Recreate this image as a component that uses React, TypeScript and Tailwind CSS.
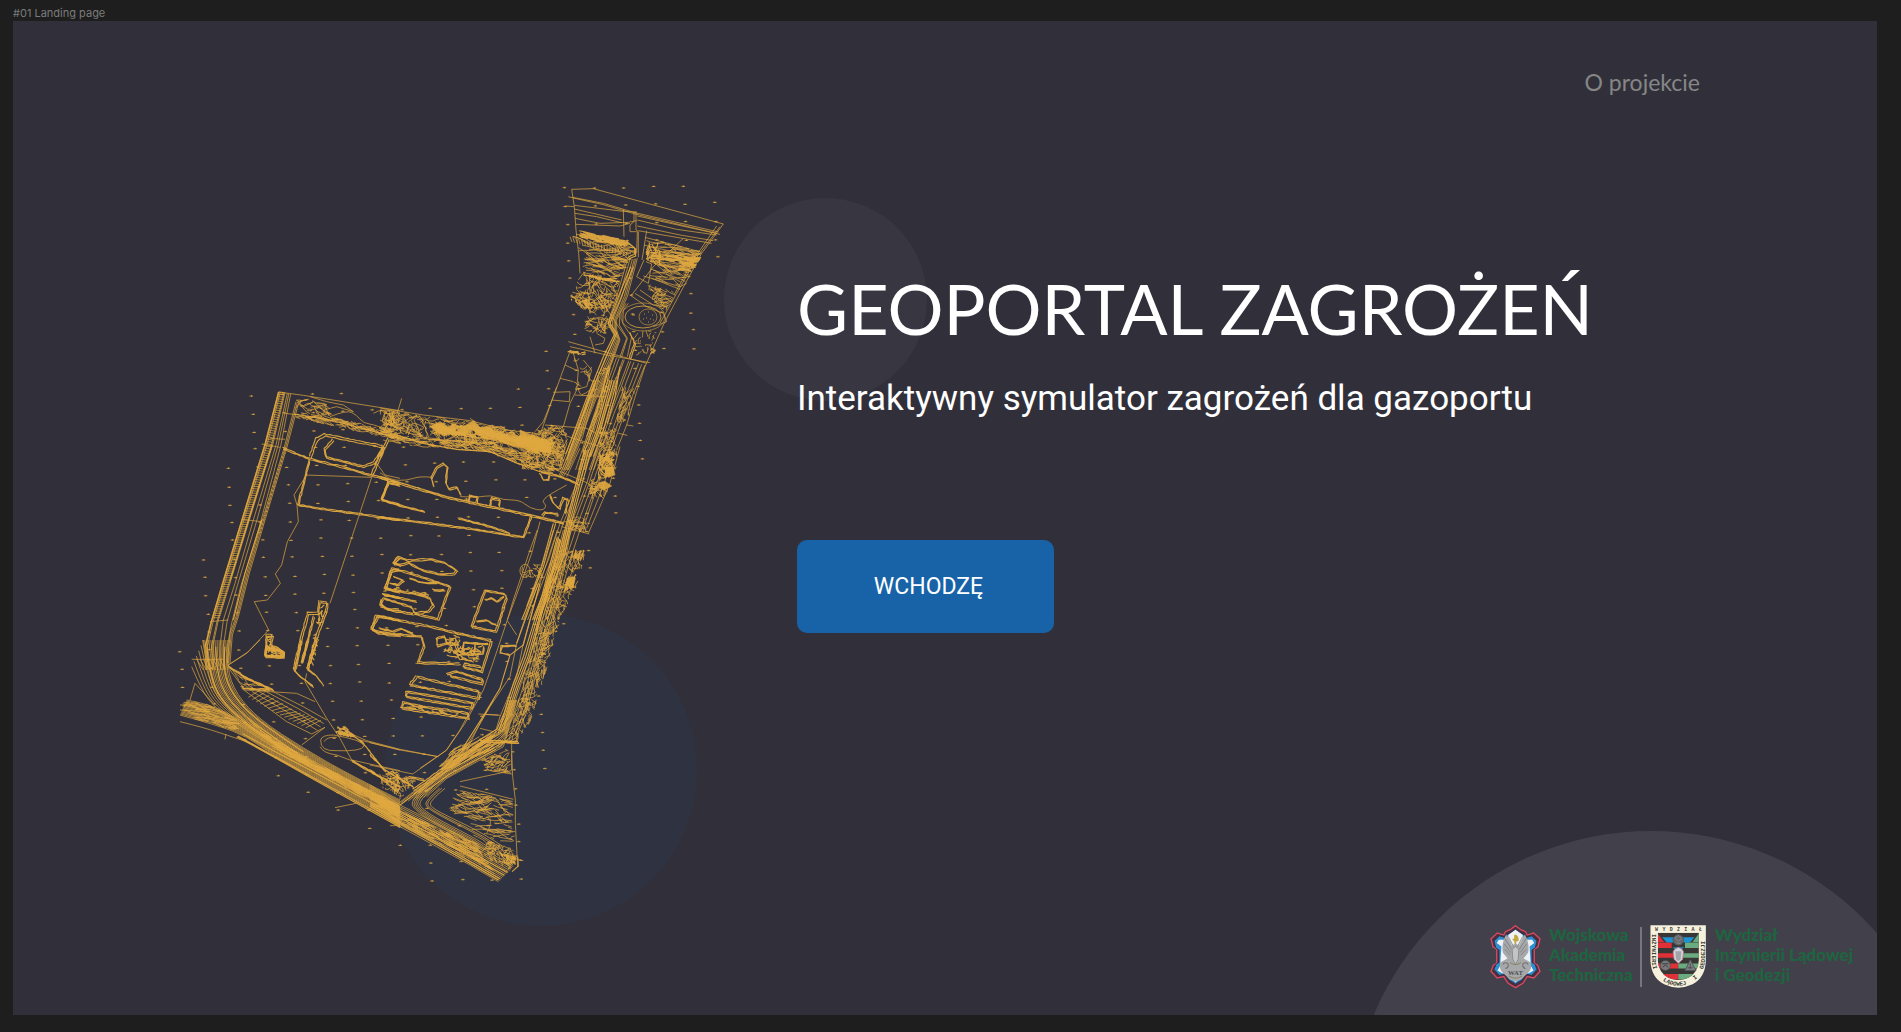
import React from 'react';

type Pt = [number, number];

/* ---------- drawing helpers for the survey map ---------- */

let seed = 7;
const rnd = () => {
  seed = (seed * 16807) % 2147483647;
  return seed / 2147483647;
};
const jit = (a: number) => (rnd() - 0.5) * 2 * a;
const n1 = (v: number) => Math.round(v * 10) / 10;

const parse = (s: string): Pt[] =>
  s.split(' ').map((p) => {
    const [x, y] = p.split(',');
    return [Number(x), Number(y)] as Pt;
  });

const line = (pts: Pt[]) => 'M' + pts.map((p) => `${n1(p[0])} ${n1(p[1])}`).join('L');

const smooth = (pts: Pt[]) => {
  if (pts.length < 3) return line(pts);
  let d = `M${n1(pts[0][0])} ${n1(pts[0][1])}`;
  for (let i = 1; i < pts.length - 1; i++) {
    const last = i === pts.length - 2;
    const ex = last ? pts[i + 1][0] : (pts[i][0] + pts[i + 1][0]) / 2;
    const ey = last ? pts[i + 1][1] : (pts[i][1] + pts[i + 1][1]) / 2;
    d += `Q${n1(pts[i][0])} ${n1(pts[i][1])} ${n1(ex)} ${n1(ey)}`;
  }
  return d;
};

const mix = (a: Pt, b: Pt, t: number): Pt => [a[0] + (b[0] - a[0]) * t, a[1] + (b[1] - a[1]) * t];

/* a family of lines between two edge polylines */
const family = (a: string, b: string, ts: number[], curved = false) => {
  const A = parse(a);
  const B = parse(b);
  return ts
    .map((t) => {
      const pts = A.map((p, i) => mix(p, B[i], t));
      return curved ? smooth(pts) : line(pts);
    })
    .join('');
};

/* short rungs between two edge polylines */
const rungs = (a: string, b: string, step: number) => {
  const A = parse(a);
  const B = parse(b);
  let d = '';
  for (let i = 0; i < A.length - 1; i++) {
    const len = Math.hypot(A[i + 1][0] - A[i][0], A[i + 1][1] - A[i][1]);
    const n = Math.max(1, Math.round(len / step));
    for (let k = 0; k < n; k++) {
      d += line([mix(A[i], A[i + 1], k / n), mix(B[i], B[i + 1], k / n)]);
    }
  }
  return d;
};

const inside = (x: number, y: number, poly: Pt[]) => {
  let c = false;
  for (let i = 0, j = poly.length - 1; i < poly.length; j = i++) {
    const [xi, yi] = poly[i];
    const [xj, yj] = poly[j];
    if (yi > y !== yj > y && x < ((xj - xi) * (y - yi)) / (yj - yi) + xi) c = !c;
  }
  return c;
};

/* wandering contour strokes inside a polygon */
const scribble = (poly: string, n: number, len: number, deg: number, spread: number) => {
  const P = parse(poly);
  const xs = P.map((p) => p[0]);
  const ys = P.map((p) => p[1]);
  const x0 = Math.min(...xs);
  const x1 = Math.max(...xs);
  const y0 = Math.min(...ys);
  const y1 = Math.max(...ys);
  let d = '';
  for (let k = 0; k < n; k++) {
    let x = 0;
    let y = 0;
    let tries = 0;
    do {
      x = x0 + rnd() * (x1 - x0);
      y = y0 + rnd() * (y1 - y0);
      tries++;
    } while (!inside(x, y, P) && tries < 60);
    const pts: Pt[] = [[x, y]];
    let a = ((deg + jit(spread)) * Math.PI) / 180;
    for (let s = 0; s < 4; s++) {
      a += jit((spread * Math.PI) / 360);
      x += (Math.cos(a) * len) / 4;
      y += (Math.sin(a) * len) / 4;
      if (!inside(x, y, P)) break;
      pts.push([x, y]);
    }
    if (pts.length > 1) d += line(pts);
  }
  return d;
};

/* double, slightly uneven wall line */
const wall = (s: string, w = 4) => {
  const P = parse(s);
  const dense: Pt[] = [];
  for (let i = 0; i < P.length - 1; i++) {
    const len = Math.hypot(P[i + 1][0] - P[i][0], P[i + 1][1] - P[i][1]);
    const n = Math.max(1, Math.round(len / 9));
    for (let k = 0; k < n; k++) dense.push(mix(P[i], P[i + 1], k / n));
  }
  dense.push(P[P.length - 1]);
  const off = (o: number) => dense.map(([x, y]) => [x + o * 0.7 + jit(1.2), y + o + jit(1.2)] as Pt);
  return line(off(-w / 2)) + line(off(w / 2));
};

const T = (n: number) => Array.from({ length: n }, (_, i) => i / (n - 1));

/* ---------- map sheets: each one is drawn at three units per pixel ---------- */

type Sheet = { x: number; y: number; fine: string; bold: string; solid?: string };

const north: Sheet = {
  x: 520,
  y: 170,
  fine: [
    line(parse('155,58 220,56 610,162 545,250 480,370 430,465 375,590 350,665 320,765 290,840')),
    line(parse('600,170 535,255 470,370 420,460')),
    line(parse('590,168 525,262 462,375')),
    line(parse('155,58 163,110 168,180 176,250 180,310')),
    line(parse('158,82 250,100 345,128 595,186')),
    line(parse('160,84 250,104 345,132 590,190')),
    line(parse('163,106 310,124 350,126')),
    line(parse('163,117 305,150')),
    line(parse('165,130 230,140 305,158')),
    line(parse('165,145 240,160 325,157 350,152')),
    line(parse('168,163 300,168 330,160')),
    line(parse('352,150 470,178 590,195')),
    line(parse('352,168 480,195 580,212')),
    line(parse('355,182 400,190 575,220')),
    line(parse('352,138 600,193')),
    line(parse('145,80 160,84')),
    line(parse('137,108 162,110')),
    line(parse('310,118 312,200')),
    line(parse('342,125 342,155 330,165 330,185 350,185')),
    line(parse('348,125 348,180 355,185 355,262')),
    line(parse('352,185 350,250')),
    line(parse('380,182 366,270')),
    line(parse('490,205 400,290 335,375')),
    line(parse('500,305 390,270')),
    line(parse('375,202 540,245')),
    line(parse('372,225 530,262')),
    line(parse('370,318 480,350 500,340')),
    line(parse('400,300 490,330')),
    line(parse('395,325 480,358')),
    line(parse('372,270 350,320 385,340 395,282 378,275')),
    line(parse('330,375 380,410 430,430 440,455 400,470')),
    line(parse('345,370 400,405 440,410')),
    line(parse('360,360 410,395 445,400')),
    family('322,270 290,380 265,455 265,465 285,500 260,560 215,660 175,760 135,860 120,900', '352,265 322,380 290,450 290,480 300,510 275,580 235,670 195,770 155,870 145,900', [0, 0.25, 0.5, 0.7, 0.85, 1]),
    line(parse('325,400 310,420 308,460 335,500 322,560')),
    line(parse('318,400 300,430 298,465 322,505 305,560')),
    line(parse('215,350 250,400 285,455 320,505 300,560')),
    line(parse('150,545 135,585 105,668 70,755 45,785')),
    line(parse('160,550 175,600 170,660 150,700 130,770')),
    line(parse('135,585 172,602')),
    line(parse('120,625 160,635')),
    line(parse('100,667 150,665 148,695 95,690')),
    line(parse('145,515 270,550 380,580')),
    line(parse('150,530 260,555 390,578')),
    line(parse('210,500 225,550')),
    line(parse('165,675 260,680')),
    line(parse('190,570 215,600 200,650 165,660')),
    line(parse('230,490 255,505 250,520 225,525')),
    family('278,560 250,640 225,720 195,810 165,900', '375,585 345,660 310,740 285,810 250,900', [0.02, 0.12, 0.2, 0.32, 0.36, 0.5, 0.56, 0.66, 0.8, 0.9, 1]),
    line(parse('75,765 200,775 230,790')),
    line(parse('130,795 240,830')),
    line(parse('320,765 340,768')),
    line(parse('295,790 322,796')),
    rungs('150,200 330,245', '156,216 326,262', 9),
    scribble('150,185 330,215 350,240 300,330 180,300 176,240', 110, 60, 12, 25),
    scribble('180,300 300,330 290,400 250,440 200,430 150,385 165,340', 110, 40, 20, 80),
    scribble('375,200 550,245 490,350 440,340 390,320 372,270', 100, 55, 12, 22),
    scribble('380,340 480,370 440,430 400,400', 44, 34, 160, 60),
    scribble('195,430 285,440 265,490 190,490', 50, 36, 150, 70),
    scribble('335,480 410,480 400,550 335,560', 22, 20, 100, 80),
    scribble('300,650 350,650 320,760 290,760', 36, 40, 110, 40),
    scribble('240,760 290,770 290,900 230,900', 54, 26, 110, 90),
    scribble('160,560 300,600 280,700 160,680', 30, 26, 100, 90),
    scribble('45,780 150,760 130,900 0,900 0,800', 130, 36, 20, 80),
  ].join(''),
  bold: [
    scribble('170,180 325,212 325,232 170,200', 60, 50, 12, 10),
    scribble('480,265 545,262 520,305 470,300', 50, 30, 10, 20),
    scribble('375,205 430,215 420,290 375,270', 24, 30, 100, 60),
    scribble('380,245 540,262 530,280 390,270', 30, 40, 8, 10),
    scribble('180,310 300,325 300,338 185,320', 24, 40, 8, 10),
    scribble('146,372 205,385 230,420 200,415 150,390', 32, 22, 20, 80),
    scribble('140,538 200,545 200,556 140,552', 16, 24, 5, 30),
    scribble('380,538 410,530 405,552 385,552', 12, 14, 20, 80),
    wall('330,490 345,520 330,565', 5),
    wall('320,215 345,235 345,255 325,265', 5),
    line(parse('340,290 300,390 270,460 290,490 258,560 205,690 145,850')),
    line(parse('332,290 295,380 265,460 284,492 250,560 198,690 138,850')),
    wall('268,590 258,640 240,710 190,850', 6),
    line(parse('262,600 250,650 230,720 200,800')),
    line(parse('300,590 285,680 262,760')),
  ].join(''),
  solid: 'M0 780L45 800L95 818L90 850L40 840L0 815Z',
};

const west: Sheet = {
  x: 170,
  y: 370,
  fine: [
    line(parse('325,66 400,76 690,122')),
    family('325,66 285,220 215,450 160,630 122,760 105,830 108,900', '345,68 308,225 238,450 183,630 145,750 128,830 132,900', [0, 0.12, 0.3, 0.85, 1]),
    rungs('327,66 287,220 217,450 162,630 125,750', '345,68 308,225 238,450 183,630 148,750', 7),
    family('352,70 318,225 250,450 195,640 160,750 150,830 152,900', '362,72 332,228 268,470 212,650 185,760 172,830 172,900', [0, 0.45, 1]),
    family('378,95 342,235 280,440 230,610 198,740 180,790 172,880', '386,98 350,235 288,440 238,610 205,740 187,795 180,880', [0, 0.5, 1]),
    rungs('342,235 318,310 262,500', '350,238 326,312 270,500', 13),
    line(parse('275,222 330,232')),
    line(parse('300,205 345,208')),
    line(parse('215,448 275,455')),
    line(parse('120,755 175,750')),
    line(parse('345,130 385,135')),
    line(parse('405,315 605,322')),
    line(parse('605,322 480,700')),
    line(parse('400,330 372,375 381,405 385,455 352,515 335,585 316,612 331,640 292,690 253,695 296,780 230,850 175,885')),
    line(parse('620,280 645,315 690,325')),
    line(parse('380,90 400,110 430,95 460,120 500,110 550,125 520,105 470,95 420,80')),
    smooth(parse('480,140 530,120 560,135 580,160 620,165 660,185')),
    smooth(parse('610,130 640,110 690,130')),
    scribble('375,80 470,95 490,140 375,130', 34, 40, 30, 60),
    scribble('372,125 480,140 690,182 690,210 560,185 372,142', 110, 34, 14, 26),
    scribble('620,120 690,120 690,180 640,160', 30, 26, 40, 90),
    family('80,868 100,900', '150,868 165,900', T(8)),
    line(parse('65,868 160,868')),
  ].join(''),
  bold: [
    line(parse('326,66 286,220 216,450 161,630 123,758 106,830')),
    line(parse('306,225 236,450 180,632')),
    line(parse('275,450 225,610 190,750')),
    line(parse('372,132 480,150 690,205')),
    wall('340,235 420,267 520,292 605,316 690,340', 5),
    wall('420,262 440,208 465,195 640,230 625,270', 7),
    wall('490,208 465,238 468,262 580,290 612,278 640,236', 5),
    wall('655,205 630,262 605,316', 6),
    wall('418,270 404,330 384,405 480,420 565,432', 4),
    wall('565,432 690,450', 4),
    wall('690,405 635,388 655,338 690,348', 4),
    wall('290,795 308,797 303,825 342,845 340,862 287,860 290,795', 5),
    scribble('286,795 308,797 303,825 342,845 340,862 287,862', 50, 20, 10, 40),
    wall('450,695 472,698 470,720 440,800 412,900', 6),
    wall('448,695 445,730 415,730 395,800 372,900', 6),
    wall('432,740 395,880', 4),
    scribble('450,700 472,700 430,890 410,890', 34, 18, 100, 60),
    wall('690,562 672,578 690,588', 4),
    wall('690,598 662,605 648,655 690,668', 5),
    wall('640,675 690,685', 4),
    wall('690,720 650,718 632,700 640,685', 5),
    wall('690,752 625,738 605,775 625,790 690,798', 5),
  ].join(''),
};

const middle: Sheet = {
  x: 380,
  y: 380,
  fine: [
    line(parse('0,84 130,105 270,122 380,150 480,162')),
    line(parse('65,55 50,105')),
    line(parse('270,115 290,128')),
    smooth(parse('0,278 30,300 80,302 120,288 158,292')),
    smooth(parse('240,350 300,352 330,345 370,360 420,360 450,385 490,392 500,375 485,365 505,345 560,315')),
    line(parse('480,425 455,520 430,590 382,720')),
    line(parse('480,165 530,20')),
    line(parse('0,120 60,150 120,170 230,185 320,190')),
    line(parse('600,205 560,290')),
    family('640,0 590,170 555,250 535,290', '655,0 608,170 575,250 550,290', [0, 0.3, 0.6, 1]),
    family('615,210 590,310 540,430 505,540 430,720', '690,200 650,310 600,450 570,540 520,720', [0, 0.14, 0.5, 0.62, 0.8, 1]),
    family('690,210 655,310 615,430', '720,200 690,310 625,460', [0, 0.5, 1]),
    line(parse('530,270 625,310 670,355')),
    line(parse('550,425 630,430')),
    line(parse('545,440 628,462')),
    scribble('0,85 130,105 150,180 0,150', 100, 34, 20, 90),
    scribble('0,150 130,175 320,180 480,240 540,270 520,285 420,255 320,215 120,202 0,180', 230, 34, 12, 30),
    scribble('130,105 380,140 520,170 520,225 420,230 320,200 140,180', 210, 40, 18, 60),
    scribble('470,150 545,120 560,200 540,280 500,250', 80, 26, 100, 90),
    scribble('630,290 690,300 680,350 620,360', 40, 34, 100, 90),
    scribble('560,410 625,410 620,460 560,450', 44, 24, 90, 90),
    scribble('550,500 620,510 590,620 540,720 490,720', 110, 24, 110, 60),
    scribble('655,150 700,150 700,205 655,205', 26, 22, 100, 90),
    scribble('420,555 490,550 495,595 425,595', 22, 22, 60, 90),
    'M420 570A14 18 0 1 0 450 575A14 18 0 1 0 420 570M455 570A12 16 0 1 0 480 572',
  ].join(''),
  bold: [
    line(parse('0,152 60,168 130,190 230,208 330,215 400,245 480,275')),
    wall('480,275 540,290 595,312', 5),
    wall('0,292 100,322 200,352 320,378 450,406 550,430', 6),
    line(parse('0,290 100,320 200,350 320,376 450,404 550,428')),
    wall('0,412 130,428 260,445 430,472 455,408', 4),
    wall('25,305 5,360 65,378 135,396', 4),
    wall('235,415 330,440 390,460', 4),
    wall('160,318 155,295 170,262 190,252 202,262 198,310 208,328 232,322 242,345', 4),
    wall('265,365 270,348 292,352 290,368', 4),
    wall('330,378 335,355 360,360 357,380', 4),
    wall('510,345 520,370 538,385 550,355 565,360 555,400', 4),
    wall('487,408 495,398 535,402', 3),
    wall('480,280 490,300 505,300 508,285', 3),
    family('610,210 585,310 560,420 535,520 455,720', '640,210 612,310 580,420 560,520 480,720', [0.1, 0.3, 0.55, 0.8]),
    family('690,0 650,150 620,230', '712,0 670,150 640,230', [0, 0.3, 0.6, 1]),
    line(parse('527,430 490,560 425,720')),
    line(parse('520,430 484,560 440,680')),
    line(parse('645,10 600,130 560,240')),
    scribble('150,125 380,150 520,190 500,218 330,180 150,160', 190, 34, 15, 30),
    scribble('655,215 705,212 700,290 655,300', 60, 28, 100, 60),
    scribble('560,590 590,580 580,625 550,640', 34, 20, 100, 60),
    scribble('585,508 622,510 600,545 580,535', 34, 24, 110, 30),
  ].join(''),
  solid:
    'M150 140L180 125L205 140L228 132L226 155L250 140L280 122L300 142L330 140L345 158L400 165L430 178L460 165L480 180L515 200L512 218L480 205L470 222L430 205L400 200L370 188L340 170L300 165L280 150L240 165L215 160L190 168L170 155ZM657 308L675 304L695 318L672 330L657 322ZM672 262L700 262L705 285L680 290ZM565 590L585 592L580 618L556 616Z',
};

const plant: Sheet = {
  x: 350,
  y: 530,
  fine: [
    line(parse('562,0 540,60 515,135 490,210 472,270 425,410 400,480 345,580 290,660 210,715')),
    line(parse('472,272 500,315')),
    line(parse('0,610 50,632 150,658 265,680')),
    line(parse('385,552 450,556')),
    line(parse('390,595 430,605')),
    family('610,0 560,160 500,340 480,440 420,530 385,590 330,680 275,720', '622,0 570,160 520,340 500,440 450,560 435,610 370,650 300,720', [0, 1]),
    family('640,0 600,160 545,360 510,470 480,560 435,610', '665,0 630,200 570,400 530,560 500,630 480,640', [0, 0.2, 0.4, 0.6, 0.75, 0.9]),
    scribble('600,100 632,60 632,270 590,420 545,570 500,640 465,640 500,520 545,360', 260, 26, 105, 50),
    scribble('560,300 625,300 620,320 590,320 590,400 560,400', 34, 20, 0, 20),
    scribble('500,500 545,500 535,575 495,575', 34, 18, 10, 90),
    scribble('320,640 440,600 480,640 290,720 260,720', 100, 60, 145, 16),
    line(parse('485,640 485,720')),
  ].join(''),
  bold: [
    wall('130,102 145,82 178,92 240,88 282,98 320,122 313,133 265,133 215,120 175,98 155,105 130,102', 5),
    wall('128,115 180,130 300,170 265,268 190,250', 5),
    wall('128,115 105,178 190,190 240,205 250,228 235,245 195,250 185,232 100,205', 5),
    wall('98,192 200,216', 4),
    wall('95,210 92,228 130,242 190,252', 5),
    wall('130,140 160,152 145,165 120,160', 3),
    wall('178,145 215,158 260,160', 3),
    wall('248,180 285,182', 4),
    scribble('110,165 240,190 235,202 108,180', 24, 24, 10, 40),
    wall('78,258 65,300 110,310 215,320 222,350 205,398 330,402', 5),
    wall('78,258 250,292 330,312 425,332 395,425 342,412 345,402 395,412', 5),
    wall('88,295 130,305 155,296 190,312', 4),
    wall('342,340 335,372 370,376', 3),
    wall('375,345 372,372 398,372 402,350', 3),
    wall('340,338 415,342', 3),
    wall('405,182 465,192 470,205 438,305 365,290 405,182', 5),
    wall('405,210 425,205 440,215 462,200', 3),
    wall('380,275 410,270 425,280 440,285', 3),
    wall('260,325 285,320 290,340 262,348 260,325', 4),
    scribble('260,360 400,345 385,400 290,385', 40, 34, 15, 60),
    scribble('290,315 335,315 330,385 280,360', 34, 22, 60, 90),
    wall('290,432 320,425 400,450 395,462 300,438', 5),
    wall('200,440 180,465 385,505 388,485 290,462 200,440', 5),
    wall('170,485 168,500 365,535 370,520 260,500 170,485', 5),
    wall('160,518 155,535 355,565 355,550 230,532 160,518', 5),
    scribble('160,525 350,552 350,562 160,535', 24, 26, 10, 40),
    wall('500,348 455,348 450,368 480,375', 3),
    line(parse('570,160 520,345 480,375 450,475 405,550 335,660')),
    line(parse('565,160 500,340')),
    family('622,20 575,200 520,380 490,460 462,550 440,600', '632,30 590,200 540,380 505,470 475,560 455,605', [0, 0.35, 0.7, 1]),
    wall('390,633 505,637', 5),
    line(parse('440,598 340,660 270,720')),
  ].join(''),
};

const rail: Sheet = {
  x: 170,
  y: 640,
  fine: [
    family('178,0 168,80 200,165 270,240 400,325 540,405 690,480', '98,0 112,90 135,170 230,260 350,340 500,420 690,520', T(14), true),
    family('100,0 120,110 160,190 250,260 400,350 690,500', '65,80 90,140 130,200 220,265 390,370 690,520', T(6), true),
    family('50,180 120,192 220,245 300,300 430,370 560,435 690,500', '30,225 150,258 230,290 310,345 430,415 560,480 690,555', T(15), true),
    smooth(parse('30,245 100,262 200,295 250,312 310,350')),
    line(parse('75,130 60,180')),
    line(parse('75,130 130,190')),
    line(parse('168,282 165,298')),
    line(parse('30,195 110,195')),
    line(parse('30,210 120,215')),
    line(parse('175,75 235,35 270,0')),
    line(parse('215,145 350,245 425,282 465,262')),
    line(parse('180,90 225,150 300,155 380,160 435,185')),
    line(parse('410,100 405,125 470,235 510,295 545,360 605,395')),
    line(parse('465,262 395,315')),
    line(parse('570,300 690,330')),
    line(parse('545,360 690,392')),
    line(parse('495,503 558,490')),
    'M452 300Q455 285 490 285Q580 300 582 318Q575 335 500 332Q450 335 452 300Z',
    'M462 305Q470 290 500 292M450 320Q460 340 500 345L545 362',
    family('240,155 350,220 440,275', '300,150 400,200 470,240', [0.1, 0.4, 0.7, 1]),
    rungs('235,172 330,225 420,270', '270,150 380,215 465,245', 14),
    scribble('180,80 310,150 220,150', 30, 34, 30, 30),
    scribble('220,225 300,290 430,365 690,495 690,530 560,460 300,320', 260, 34, 29, 10),
    scribble('30,185 110,185 220,250 200,275 30,225', 70, 44, 14, 14),
    scribble('620,400 690,400 690,470 640,450', 34, 22, 30, 90),
  ].join(''),
  bold: [
    family('165,20 158,90 190,170 265,245 400,335', '110,20 120,100 150,180 240,262 370,350', [0, 0.5, 1], true),
    wall('175,80 230,115 310,150', 4),
    wall('215,145 300,150', 3),
    wall('372,90 385,105 430,140', 4),
    wall('412,88 435,105 460,135', 5),
    wall('375,90 395,0', 5),
    wall('412,88 440,0', 5),
    wall('396,68 415,0', 4),
    scribble('488,255 525,258 560,295 500,285', 44, 24, 35, 40),
    wall('530,270 580,310 645,395', 4),
    wall('545,362 610,400 690,440', 4),
    wall('285,48 290,22 342,38 340,50 287,48', 5),
    family('200,290 310,350 430,418 690,562', '230,275 320,325 430,380 690,515', [0, 0.12, 0.6]),
    scribble('640,405 690,400 690,440 650,440', 12, 18, 40, 90),
  ].join(''),
};

const south: Sheet = {
  x: 370,
  y: 700,
  fine: [
    family('0,255 90,315 200,370 330,440 430,500', '0,325 90,380 200,440 300,495 385,545', T(13)),
    family('85,310 170,245 290,155 350,115 400,90 420,0', '170,290 230,235 330,180 400,140 410,110 440,0', [0, 0.08, 0.2, 0.35, 0.5, 0.62, 0.75, 0.9, 1]),
    family('160,262 125,300 128,325 200,375 310,430 335,450', '225,265 180,302 182,322 240,352 340,400 400,440', [0, 0.1, 0.2, 0.3, 0.42, 0.75, 0.85, 1], true),
    smooth(parse('310,405 345,420 355,440 330,460')),
    line(parse('425,160 428,230 436,300 436,370 443,500')),
    line(parse('370,0 330,70 290,150')),
    line(parse('318,0 270,90 228,152 128,222')),
    line(parse('0,128 90,150 205,170')),
    line(parse('0,195 128,222')),
    line(parse('270,245 340,230 425,212')),
    line(parse('345,43 385,45')),
    line(parse('270,258 430,298')),
    line(parse('60,377 90,377')),
    line(parse('355,195 350,210 425,222')),
    smooth(parse('238,325 270,310 290,325 285,345 240,330')),
    smooth(parse('305,388 380,385 435,395')),
    smooth(parse('350,400 365,375 360,355')),
    line(parse('415,470 460,482')),
    scribble('330,180 420,140 425,222 350,212', 60, 30, 160, 40),
    scribble('250,265 430,300 435,375 320,365 240,340', 100, 44, 10, 30),
    scribble('300,370 435,370 438,440 350,410', 26, 50, 8, 20),
    scribble('345,420 420,440 445,470 420,510 340,470', 80, 24, 40, 80),
    scribble('0,265 90,325 330,450 385,530 300,480 90,370 0,315', 200, 34, 29, 10),
    scribble('70,215 140,240 90,300 60,270', 40, 26, 40, 90),
    scribble('200,370 300,420 340,430 320,460 210,400', 60, 26, 29, 20),
  ].join(''),
  bold: [
    family('0,318 90,372 200,432 385,540', '0,270 90,335 200,392 420,512', [0, 0.14, 0.5, 0.8]),
    family('120,285 220,205 360,125', '170,275 240,225 380,150', [0.2, 0.5, 0.9]),
    wall('130,270 215,210 345,125', 5),
    wall('340,123 445,127', 5),
    line(parse('90,315 180,248 300,160')),
    wall('0,165 45,210 130,260', 3),
    wall('50,225 70,215 100,245 120,232 165,240', 4),
    wall('0,210 40,240 75,270', 4),
    line(parse('385,100 415,0')),
    line(parse('375,105 350,120 300,155')),
    scribble('385,455 440,470 435,495 400,490', 26, 22, 40, 60),
    line(parse('426,515 445,498 443,470')),
  ].join(''),
};

const sheets = [north, west, middle, plant, rail, south];

/* levelling points on the survey lattice */
const surveyArea = parse(
  '560,180 690,180 724,195 724,265 700,290 700,360 655,365 650,450 625,495 595,575 560,640 550,760 525,885 425,890 420,860 300,805 270,780 262,760 172,700 172,660 196,575 225,485 244,385 500,400 550,330 565,270',
);
let levelPoints = '';
for (let i = -8; i < 18; i++) {
  for (let j = -14; j < 30; j++) {
    const x = 311.7 + i * 29.6 + j * 1.2 + jit(1);
    const y = 394 - i * 0.7 + j * 18.1 + jit(1);
    if (inside(x, y, surveyArea)) levelPoints += `M${n1(x - 2)} ${n1(y)}h3.6M${n1(x)} ${n1(y - 1)}v1.6`;
  }
}

function SurveyMap() {
  return (
    <svg
      viewBox="175 180 560 705"
      className="w-[560px] shrink-0 overflow-visible"
      fill="none"
      stroke="#dfa83f"
      role="img"
      aria-label="Mapa gazoportu"
    >
      <path d={levelPoints} strokeWidth="1" opacity="0.75" />
      {sheets.map((s) => (
        <g key={`${s.x}-${s.y}`} transform={`translate(${s.x} ${s.y}) scale(0.33333)`}>
          <path d={s.fine} strokeWidth="2.7" opacity="0.78" />
          <path d={s.bold} strokeWidth="3.4" opacity="0.95" />
          {s.solid && <path d={s.solid} fill="#dfa83f" strokeWidth="2" opacity="0.9" />}
        </g>
      ))}
      <g strokeWidth="0.8">
        <ellipse cx="643" cy="317" rx="18" ry="11" />
        <ellipse cx="643" cy="317" rx="22" ry="14" opacity="0.7" />
        <ellipse cx="648" cy="317" rx="9" ry="8" opacity="0.7" />
        <path d="M644 314h1M648 312h1M652 315h1M646 318h1M650 319h1M648 322h1M653 320h1M643 319h1M632 315h3" />
        <path d="M640 341h1M645 345h1M643 350h1M649 338h1M652 343h1M648 349h1M638 353h1" />
      </g>
    </svg>
  );
}

/* ---------- emblems ---------- */

const badge =
  'M136 80L152 92L166 98L171 108L190 102L209 119L203 143L192 150L192 192L202 198L209 216L191 236L171 232L158 252L136 265L114 252L101 232L81 236L63 216L70 198L80 192L80 150L69 143L63 119L82 102L101 108L106 98L120 92Z';

function AcademyEmblem() {
  return (
    <svg viewBox="60 75 152 194" className="h-[65px] w-[51px] shrink-0" role="img" aria-label="WAT">
      <path d={badge} fill="#4a2f3f" stroke="#d9495f" strokeWidth="4" />
      <g transform="translate(136 172) scale(0.88) translate(-136 -172)">
        <path d={badge} fill="#2f8fd0" stroke="#33304a" strokeWidth="3" />
      </g>
      <path d="M136 92L156 106L164 122L186 122L192 132L178 142L182 200L190 214L176 222L158 222L136 250L114 222L96 222L82 214L90 200L94 142L80 132L86 122L108 122L116 106Z" fill="#eef2f6" />
      <path d="M108 106Q94 130 98 160L112 178L90 190Q86 210 100 222L118 240L136 247L154 240L172 222Q186 210 182 190L160 178L174 160Q178 130 164 106L156 120L146 140L136 132L126 140L116 120Z" fill="#a7a8aa" />
      <path d="M104 118L124 150M102 134L122 160M104 150L120 168M168 118L148 150M170 134L150 160M168 150L152 168M114 112L130 142M158 112L142 142" stroke="#7d7e81" strokeWidth="2.5" fill="none" />
      <path d="M98 196Q104 186 114 194Q116 206 106 208M174 196Q168 186 158 194Q156 206 166 208" stroke="#6f7073" strokeWidth="3" fill="none" />
      <path d="M126 150L136 142L146 150L144 180L136 196L128 180Z" fill="#c3c4c6" stroke="#77787b" strokeWidth="2" />
      <path d="M120 190Q136 202 152 190M116 230Q136 244 156 230" stroke="#86805a" strokeWidth="3" fill="none" />
      <path d="M132 108L138 106L144 114L146 124L138 128L138 134H133V128L126 120L132 118Z" fill="#c5a83c" />
      <text x="136" y="227" textAnchor="middle" fontSize="20" fontWeight="700" fill="#4f5053" fontFamily="Liberation Serif, serif">
        WAT
      </text>
    </svg>
  );
}

function FacultyEmblem() {
  return (
    <svg viewBox="540 77 168 190" className="h-[63px] w-[56px] shrink-0" role="img" aria-label="Wydział Inżynierii Lądowej i Geodezji">
      <defs>
        <clipPath id="field">
          <path d="M563 100H687V185Q684 222 655 236Q625 250 595 236Q566 222 563 185Z" />
        </clipPath>
        <path id="rim" d="M545 104V190Q549 228 585 249Q625 272 665 249Q702 226 704 190V96" />
      </defs>
      <path d="M541 78H708V185Q706 236 668 256Q625 276 582 256Q543 236 541 185Z" fill="#f6f1dc" />
      <g clipPath="url(#field)">
        <rect x="560" y="98" width="130" height="145" fill="#393735" />
        <path d="M560 130H605V146H560ZM560 162H625V176H560ZM560 193H625V208H560ZM560 225H625V241H560Z" fill="#e03038" />
        <path d="M645 130H690V146H645ZM625 162H690V176H625ZM625 193H690V208H625ZM625 225H690V241H625Z" fill="#6bab80" />
        <path d="M576 114H674L660 130H590ZM608 144H642L625 160Z" fill="#1d93d2" />
        <path d="M561 100L582 128H561Z" fill="#e03038" />
        <path d="M689 100L668 128H689Z" fill="#6bab80" />
      </g>
      <circle cx="625" cy="122" r="16" fill="#67696b" stroke="#4a4b4d" strokeWidth="2" />
      <path d="M615 116L625 108L635 118L625 126ZM620 130L632 134" stroke="#8f9193" strokeWidth="2" fill="none" />
      <path d="M614 150L625 144L636 150L641 158L638 180L625 193L612 180L609 158Z" fill="#ccd5dd" stroke="#c86070" strokeWidth="2" />
      <path d="M616 156H634L632 180L625 186L618 180Z" fill="#a2a4a7" />
      <circle cx="586" cy="199" r="15" fill="#77797b" stroke="#4a4b4d" strokeWidth="2" />
      <path d="M576 194H596M578 204L586 198L594 204" stroke="#3f4042" strokeWidth="3" fill="none" />
      <path d="M661 182L678 214H645Z" fill="#7b8082" stroke="#55585a" strokeWidth="3" />
      <path d="M661 192V210M653 206H669" stroke="#3f4042" strokeWidth="2" />
      <g fontFamily="Liberation Mono, monospace" fontWeight="700" fill="#3c3a36">
        <text y="96" fontSize="15">
          {['W', 'Y', 'D', 'Z', 'I', 'A', 'Ł'].map((c, i) => (
            <tspan key={i} x={555 + i * 22}>
              {c}
            </tspan>
          ))}
        </text>
        <text fontSize="18">
          <textPath href="#rim">INŻYNIERII</textPath>
        </text>
        <text fontSize="18">
          <textPath href="#rim" startOffset="37%">
            LĄDOWEJ
          </textPath>
        </text>
        <text fontSize="18">
          <textPath href="#rim" startOffset="62%">
            I
          </textPath>
        </text>
        <text fontSize="18">
          <textPath href="#rim" startOffset="72%">
            GEODEZJI
          </textPath>
        </text>
      </g>
    </svg>
  );
}

/* ---------- page ---------- */

export default function App() {
  return (
    <div className="flex min-h-screen flex-col bg-[#1e1e1e] pr-6 pb-[17px] pl-[13px]">
      <p className="h-[21px] pt-[6px] font-['Inter',sans-serif] text-[11px] leading-[14px] text-[#7b7b7b]">#01 Landing page</p>

      <div className="relative flex flex-1 flex-col overflow-hidden bg-[#31303a]">
        <div className="absolute top-[177px] left-[711px] size-[203px] rounded-full bg-[#383741]" />
        <div className="absolute top-[593px] left-[372px] size-[312px] rounded-full bg-[#2f3241]" />
        <div className="absolute right-[-75px] bottom-[-418px] size-[602px] rounded-full bg-[#42414b]" />

        <header className="relative flex justify-end pt-[45px] pr-[177px]">
          <a href="#o-projekcie" className="font-['Lato',sans-serif] text-[23px] leading-8 text-[#868686]">
            O projekcie
          </a>
        </header>

        <main className="relative flex items-start gap-[62px] pt-[82px] pl-[162px]">
          <SurveyMap />
          <section className="flex min-w-0 flex-col items-start pt-[86px] text-white">
            <h1 className="font-['Lato',sans-serif] text-[70px] leading-[84px] whitespace-nowrap">GEOPORTAL ZAGROŻEŃ</h1>
            <p className="mt-7 font-['Roboto',sans-serif] text-[35px] leading-[42px] whitespace-nowrap">
              Interaktywny symulator zagrożeń dla gazoportu
            </p>
            <button
              type="button"
              className="mt-[120px] h-[93px] w-[257px] rounded-[10px] bg-[#1863a8] pl-[6px] font-['Roboto',sans-serif] text-[23px] leading-8"
            >
              WCHODZĘ
            </button>
          </section>
        </main>

        <footer className="relative mt-auto mr-[25px] mb-[26px] flex items-center justify-end font-['Lato',sans-serif] text-[17px] leading-5 font-black text-[#1e6440]">
          <AcademyEmblem />
          <p className="-mt-1 ml-2 w-[83px] whitespace-nowrap">
            Wojskowa
            <br />
            Akademia
            <br />
            Techniczna
          </p>
          <div className="mx-2 h-[60px] w-[2px] bg-[#77767d]" />
          <FacultyEmblem />
          <p className="-mt-1 ml-[9px] w-[137px] whitespace-nowrap">
            Wydział
            <br />
            Inżynierii Lądowej
            <br />i Geodezji
          </p>
        </footer>
      </div>
    </div>
  );
}
